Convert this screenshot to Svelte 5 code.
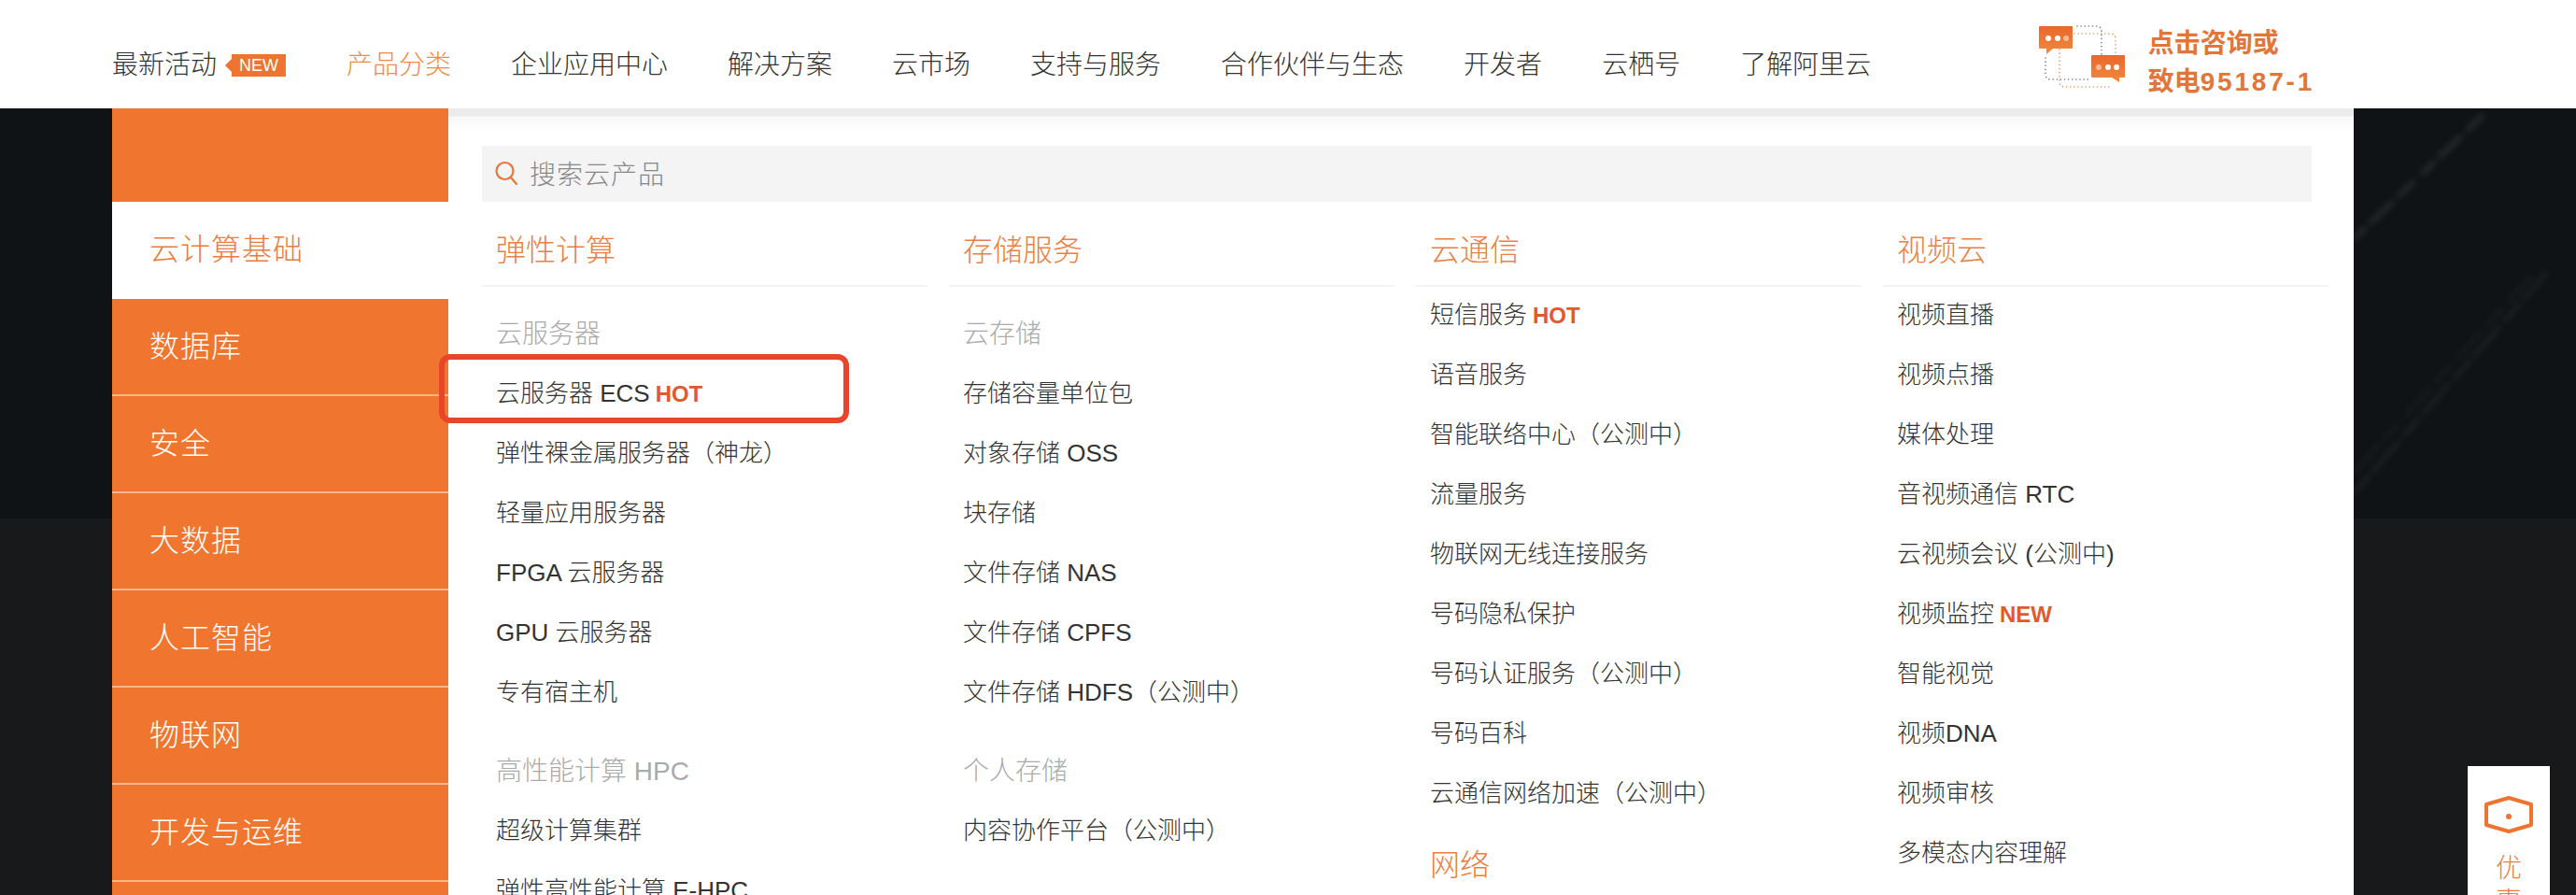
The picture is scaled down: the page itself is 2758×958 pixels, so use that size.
<script lang="ts">
  const navItems = ["产品分类", "企业应用中心", "解决方案", "云市场", "支持与服务", "合作伙伴与生态", "开发者", "云栖号", "了解阿里云"];
  const sideItems = ["数据库", "安全", "大数据", "人工智能", "物联网", "开发与运维", ""];

  // h = heading, s = sub heading, i = link (third value is the tag)
  const columns = [
    [
      ["h", "弹性计算"],
      ["s", "云服务器"],
      ["i", "云服务器 ECS", "HOT"],
      ["i", "弹性裸金属服务器（神龙）"],
      ["i", "轻量应用服务器"],
      ["i", "FPGA 云服务器"],
      ["i", "GPU 云服务器"],
      ["i", "专有宿主机"],
      ["s", "高性能计算 HPC"],
      ["i", "超级计算集群"],
      ["i", "弹性高性能计算 E-HPC"],
    ],
    [
      ["h", "存储服务"],
      ["s", "云存储"],
      ["i", "存储容量单位包"],
      ["i", "对象存储 OSS"],
      ["i", "块存储"],
      ["i", "文件存储 NAS"],
      ["i", "文件存储 CPFS"],
      ["i", "文件存储 HDFS（公测中）"],
      ["s", "个人存储"],
      ["i", "内容协作平台（公测中）"],
    ],
    [
      ["h", "云通信"],
      ["i", "短信服务", "HOT"],
      ["i", "语音服务"],
      ["i", "智能联络中心（公测中）"],
      ["i", "流量服务"],
      ["i", "物联网无线连接服务"],
      ["i", "号码隐私保护"],
      ["i", "号码认证服务（公测中）"],
      ["i", "号码百科"],
      ["i", "云通信网络加速（公测中）"],
      ["h", "网络"],
    ],
    [
      ["h", "视频云"],
      ["i", "视频直播"],
      ["i", "视频点播"],
      ["i", "媒体处理"],
      ["i", "音视频通信 RTC"],
      ["i", "云视频会议 (公测中)"],
      ["i", "视频监控", "NEW"],
      ["i", "智能视觉"],
      ["i", "视频DNA"],
      ["i", "视频审核"],
      ["i", "多模态内容理解"],
    ],
  ];
</script>

<div class="page">
  <svg class="streaks" width="238" height="439" viewBox="0 0 238 439">
    <g fill="none" stroke-linecap="round">
      <path d="M0 140 L140 6" stroke="#55585a" stroke-width="6" stroke-dasharray="16 10 30 12 20 14" opacity="0.3" />
      <path d="M0 390 L190 180" stroke="#55585a" stroke-width="3" stroke-dasharray="40 8 24 10" opacity="0.2" />
      <path d="M0 412 L207 176" stroke="#55585a" stroke-width="4" stroke-dasharray="24 8 40 10" opacity="0.25" />
    </g>
  </svg>

  <header>
    <nav>
      <a href="#top">最新活动<span class="new">NEW</span></a>
      {#each navItems as item, i}
        <a href="#top" class:on={i == 0}>{item}</a>
      {/each}
    </nav>
    <div class="contact">
      <svg width="110" height="76" viewBox="0 0 110 76">
        <defs>
          <linearGradient id="bubble" x1="0" y1="0" x2="0" y2="1">
            <stop offset="0" stop-color="#e9682c" />
            <stop offset="1" stop-color="#f08a3e" />
          </linearGradient>
        </defs>
        <g fill="none" stroke-width="1.6" stroke-linecap="round" stroke-dasharray="0.1 4">
          <path d="M14 39 V56 Q14 62 20 62 H62" stroke="#77787a" />
          <path d="M48 5 H68 Q74 5 74 11 V36" stroke="#77787a" />
          <path d="M29 30 V64 Q29 70 35 70 H85" stroke="#e2955f" />
          <path d="M45 13 H83 Q89 13 89 19 V36" stroke="#e2955f" />
        </g>
        <path d="M8 5 H42 Q43 5 43 6 V28 Q43 29 42 29 H22 L15 35 V29 H8 Q7 29 7 28 V6 Q7 5 8 5 Z" fill="url(#bubble)" />
        <path d="M64 36 H98 Q99 36 99 37 V59 Q99 60 98 60 H93 V65 L85 60 H64 Q63 60 63 59 V37 Q63 36 64 36 Z" fill="url(#bubble)" />
        <g fill="#fff">
          <circle cx="17" cy="18" r="3" />
          <circle cx="27" cy="18" r="3" />
          <circle cx="36" cy="18" r="3" opacity="0.5" />
          <circle cx="71" cy="49" r="3" opacity="0.5" />
          <circle cx="81" cy="49" r="3" />
          <circle cx="90" cy="49" r="3" />
        </g>
      </svg>
      <div class="contact-text">
        <div>点击咨询或</div>
        <div>致电<span class="tel">95187-1</span></div>
      </div>
    </div>
  </header>

  <div class="body">
    <aside>
      <div class="side-top"></div>
      <div class="side-active">云计算基础</div>
      {#each sideItems as item}
        <div class="side-item">{item}</div>
      {/each}
    </aside>

    <main>
      <div class="search">
        <svg width="26" height="26" viewBox="0 0 26 26">
          <circle cx="11.5" cy="11" r="9" fill="none" stroke="#e8763a" stroke-width="2.2" />
          <path d="M18 18 L24 25" stroke="#e8763a" stroke-width="2.2" stroke-linecap="round" />
        </svg>
        <span>搜索云产品</span>
      </div>

      <div class="cols">
        {#each columns as col}
          <div class="col">
            {#each col as entry, i}
              {#if entry[0] == "h"}
                <h3 class:later={i > 0}>{entry[1]}</h3>
              {:else if entry[0] == "s"}
                <h4 class:later={i > 1}>{entry[1]}</h4>
              {:else}
                <div class="link">{entry[1]}{#if entry[2]}<b>{entry[2]}</b>{/if}</div>
              {/if}
            {/each}
          </div>
        {/each}
      </div>

      <div class="mark"></div>
    </main>
  </div>

  <div class="promo">
    <svg width="52" height="40" viewBox="0 0 52 40">
      <path d="M26 2 L50 9 V31 L26 38 L2 31 V9 Z" fill="none" stroke="#ee7530" stroke-width="4" stroke-linejoin="round" />
      <circle cx="26" cy="22" r="3" fill="#ee7530" />
    </svg>
    <span>优惠</span>
  </div>
</div>

<style>
  :global(body) {
    background: #18191b;
  }
  .page {
    position: relative;
    height: 958px;
    overflow: hidden;
    background: linear-gradient(#101315 555px, #18191b 555px);
    font-family: "Liberation Sans", "Noto Sans CJK SC", sans-serif;
    font-weight: 300;
    color: #333;
  }
  .streaks {
    position: absolute;
    left: 2520px;
    top: 116px;
    filter: blur(3px);
  }
  header {
    display: flex;
    justify-content: space-between;
    align-items: center;
    box-sizing: border-box;
    height: 116px;
    padding: 20px 280px 0 120px;
    background: #fff;
  }
  nav {
    display: flex;
    gap: 64px;
    margin-top: 3px;
    font-size: 28px;
  }
  nav a {
    display: flex;
    align-items: center;
    color: #333;
    text-decoration: none;
    line-height: 40px;
  }
  nav a.on {
    color: #ee8a4a;
  }
  .new {
    position: relative;
    margin-left: 16px;
    margin-right: 1px;
    width: 58px;
    height: 24px;
    background: #ee7530;
    color: #fff;
    font-size: 18px;
    line-height: 24px;
    text-align: center;
  }
  .new::before {
    content: "";
    position: absolute;
    left: -7px;
    top: 5px;
    border: 7px solid transparent;
    border-left: 0;
    border-right-color: #ee7530;
  }
  .contact {
    display: flex;
    align-items: center;
    gap: 13px;
  }
  .contact svg {
    margin: 0 1px 14px 0;
  }
  .contact-text {
    margin-bottom: 2px;
    font-size: 28px;
    font-weight: 700;
    line-height: 41px;
    color: #e2763a;
  }
  .tel {
    letter-spacing: 2.8px;
  }
  .body {
    display: flex;
    height: 842px;
    padding: 0 238px 0 120px;
  }
  aside {
    flex: none;
    width: 360px;
    background: #f0762f;
    color: #fff;
    font-size: 32px;
    letter-spacing: 1px;
  }
  .side-top {
    height: 100px;
  }
  .side-active {
    height: 104px;
    padding-left: 40px;
    line-height: 102px;
    background: #fff;
    color: #ec7c3c;
  }
  .side-item {
    box-sizing: border-box;
    height: 104px;
    padding-left: 40px;
    line-height: 102px;
    border-bottom: 2px solid #f9b68e;
  }
  main {
    position: relative;
    flex: 1;
    padding: 40px 0 0 36px;
    background: linear-gradient(#ebebeb 8px, #f8f8f8 9px, #fff 24px);
  }
  .search {
    display: flex;
    align-items: center;
    gap: 12px;
    box-sizing: border-box;
    width: 1959px;
    height: 60px;
    padding: 0 0 2px 13px;
    background: #f4f4f4;
    color: #888;
    font-size: 28px;
    letter-spacing: 1px;
  }
  .cols {
    display: grid;
    grid-template-columns: repeat(4, 477px);
    gap: 23px;
  }
  h3 {
    margin: 0;
    padding: 30px 0 15px 15px;
    border-bottom: 2px solid #f3f3f3;
    color: #ea8043;
    font-size: 32px;
    font-weight: 300;
    line-height: 44px;
  }
  h3 + .link {
    margin-top: -2px;
  }
  h3.later {
    padding-top: 23px;
  }
  h4 {
    margin: 20px 0 0;
    padding-left: 15px;
    color: #aaa;
    font-size: 28px;
    font-weight: 300;
    line-height: 62px;
  }
  h4.later {
    margin-top: 22px;
  }
  .link {
    height: 64px;
    padding-left: 15px;
    font-size: 26px;
    line-height: 64px;
  }
  .link b {
    margin-left: 6px;
    color: #e2592f;
    font-size: 24px;
    font-weight: 700;
  }
  .mark {
    position: absolute;
    left: -10px;
    top: 263px;
    box-sizing: border-box;
    width: 439px;
    height: 74px;
    border: 6px solid #e8452a;
    border-radius: 12px;
  }
  .promo {
    position: absolute;
    left: 2642px;
    top: 820px;
    display: flex;
    flex-direction: column;
    align-items: center;
    box-sizing: border-box;
    width: 88px;
    height: 170px;
    padding-top: 32px;
    background: #fff;
    color: #ee7d3c;
    font-size: 28px;
    line-height: 36px;
  }
  .promo svg {
    margin-bottom: 20px;
  }
  .promo span {
    width: 28px;
    text-align: center;
  }
</style>
